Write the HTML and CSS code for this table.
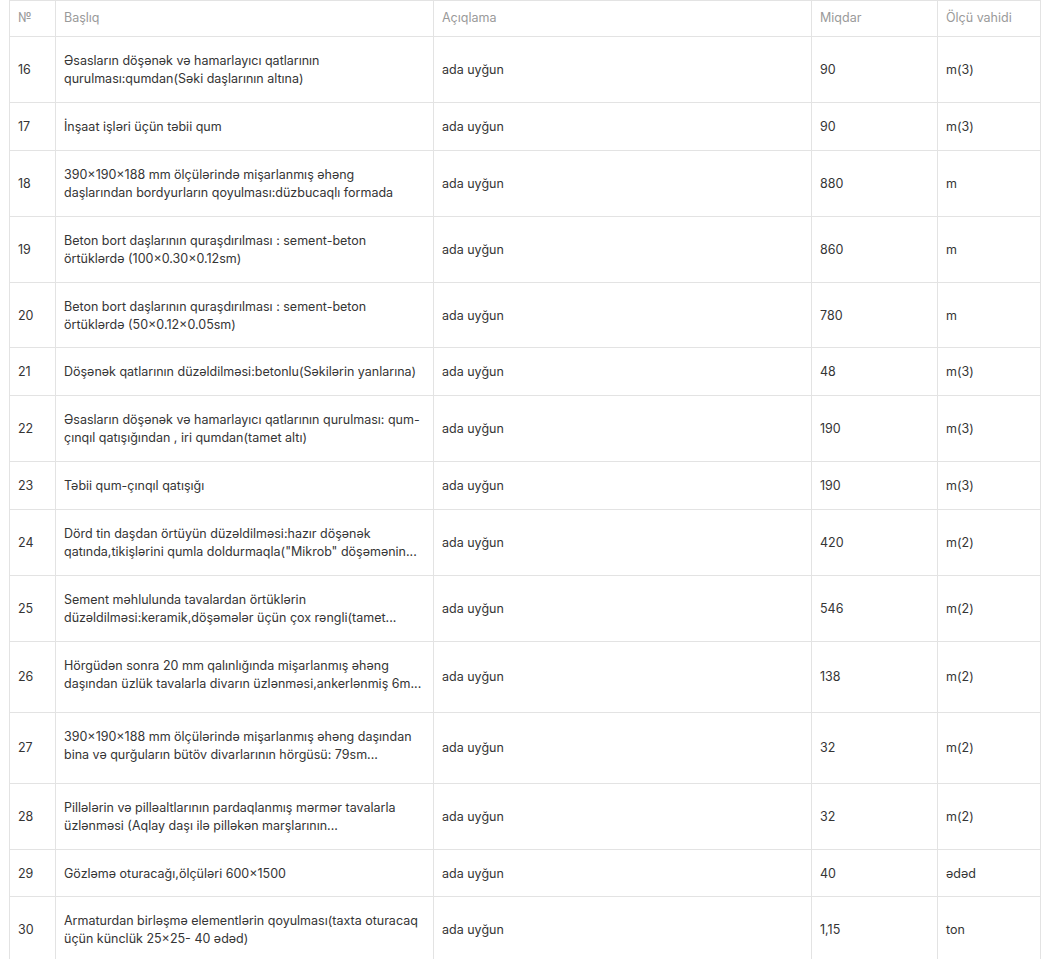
FILE: index.html
```html
<!DOCTYPE html>
<html lang="az">
<head>
<meta charset="utf-8">
<title>Siyahı</title>
<link rel="stylesheet" href="styles.css">
</head>
<body>
<div class="wrap">
<table class="items">
  <colgroup>
    <col class="c-no"><col class="c-title"><col class="c-desc"><col class="c-qty"><col class="c-unit">
  </colgroup>
  <thead>
    <tr><th>№</th><th>Başlıq</th><th>Açıqlama</th><th>Miqdar</th><th>Ölçü vahidi</th></tr>
  </thead>
  <tbody>
    <tr><td>16</td><td><div class="clamp">Əsasların döşənək və hamarlayıcı qatlarının qurulması:qumdan(Səki daşlarının altına)</div></td><td>ada uyğun</td><td>90</td><td>m(3)</td></tr>
    <tr><td>17</td><td><div class="clamp">İnşaat işləri üçün təbii qum</div></td><td>ada uyğun</td><td>90</td><td>m(3)</td></tr>
    <tr><td>18</td><td><div class="clamp">390×190×188 mm ölçülərində mişarlanmış əhəng daşlarından bordyurların qoyulması:düzbucaqlı formada</div></td><td>ada uyğun</td><td>880</td><td>m</td></tr>
    <tr><td>19</td><td><div class="clamp">Beton bort daşlarının quraşdırılması : sement-beton örtüklərdə (100×0.30×0.12sm)</div></td><td>ada uyğun</td><td>860</td><td>m</td></tr>
    <tr><td>20</td><td><div class="clamp">Beton bort daşlarının quraşdırılması : sement-beton örtüklərdə (50×0.12×0.05sm)</div></td><td>ada uyğun</td><td>780</td><td>m</td></tr>
    <tr><td>21</td><td><div class="clamp">Döşənək qatlarının düzəldilməsi:betonlu(Səkilərin yanlarına)</div></td><td>ada uyğun</td><td>48</td><td>m(3)</td></tr>
    <tr><td>22</td><td><div class="clamp">Əsasların döşənək və hamarlayıcı qatlarının qurulması: qum-çınqıl qatışığından , iri qumdan(tamet altı)</div></td><td>ada uyğun</td><td>190</td><td>m(3)</td></tr>
    <tr><td>23</td><td><div class="clamp">Təbii qum-çınqıl qatışığı</div></td><td>ada uyğun</td><td>190</td><td>m(3)</td></tr>
    <tr><td>24</td><td><div class="clamp">Dörd tin daşdan örtüyün düzəldilməsi:hazır döşənək qatında,tikişlərini qumla doldurmaqla("Mikrob" döşəmənin...</div></td><td>ada uyğun</td><td>420</td><td>m(2)</td></tr>
    <tr><td>25</td><td><div class="clamp">Sement məhlulunda tavalardan örtüklərin düzəldilməsi:keramik,döşəmələr üçün çox rəngli(tamet...</div></td><td>ada uyğun</td><td>546</td><td>m(2)</td></tr>
    <tr class="tall"><td>26</td><td><div class="clamp">Hörgüdən sonra 20 mm qalınlığında mişarlanmış əhəng daşından üzlük tavalarla divarın üzlənməsi,ankerlənmiş 6m...</div></td><td>ada uyğun</td><td>138</td><td>m(2)</td></tr>
    <tr class="tall"><td>27</td><td><div class="clamp">390×190×188 mm ölçülərində mişarlanmış əhəng daşından bina və qurğuların bütöv divarlarının hörgüsü: 79sm...</div></td><td>ada uyğun</td><td>32</td><td>m(2)</td></tr>
    <tr><td>28</td><td><div class="clamp">Pillələrin və pilləaltlarının pardaqlanmış mərmər tavalarla üzlənməsi (Aqlay daşı ilə pilləkən marşlarının...</div></td><td>ada uyğun</td><td>32</td><td>m(2)</td></tr>
    <tr><td>29</td><td><div class="clamp">Gözləmə oturacağı,ölçüləri 600×1500</div></td><td>ada uyğun</td><td>40</td><td>ədəd</td></tr>
    <tr><td>30</td><td><div class="clamp">Armaturdan birləşmə elementlərin qoyulması(taxta oturacaq üçün künclük 25×25- 40 ədəd)</div></td><td>ada uyğun</td><td>1,15</td><td>ton</td></tr>
  </tbody>
</table>
</div>
</body>
</html>
```

FILE: styles.css
```css
html, body {
  margin: 0;
  padding: 0;
  background: #ffffff;
}

body {
  font-family: Inter, "Noto Sans", "DejaVu Sans", sans-serif;
  font-size: 12.5px;
  line-height: 18px;
  color: #353535;
}

.wrap {
  padding: 0 4px 0 9px;
}

.items {
  border-collapse: collapse;
  table-layout: fixed;
  width: 1031px;
}

.c-no { width: 46px; }
.c-title { width: 378px; }
.c-desc { width: 378px; }
.c-qty { width: 126px; }
.c-unit { width: 103px; }

.items th,
.items td {
  border: 1px solid #e3e3e3;
  padding: 15px 8px 13.9px;
  text-align: left;
  vertical-align: middle;
}

.items th {
  font-weight: 400;
  color: #9a9a9a;
  padding-top: 8px;
  padding-bottom: 9px;
}

.clamp {
  display: -webkit-box;
  -webkit-box-orient: vertical;
  -webkit-line-clamp: 2;
  overflow: hidden;
}

.tall td:nth-child(2) {
  padding-bottom: 18.9px;
}
```
